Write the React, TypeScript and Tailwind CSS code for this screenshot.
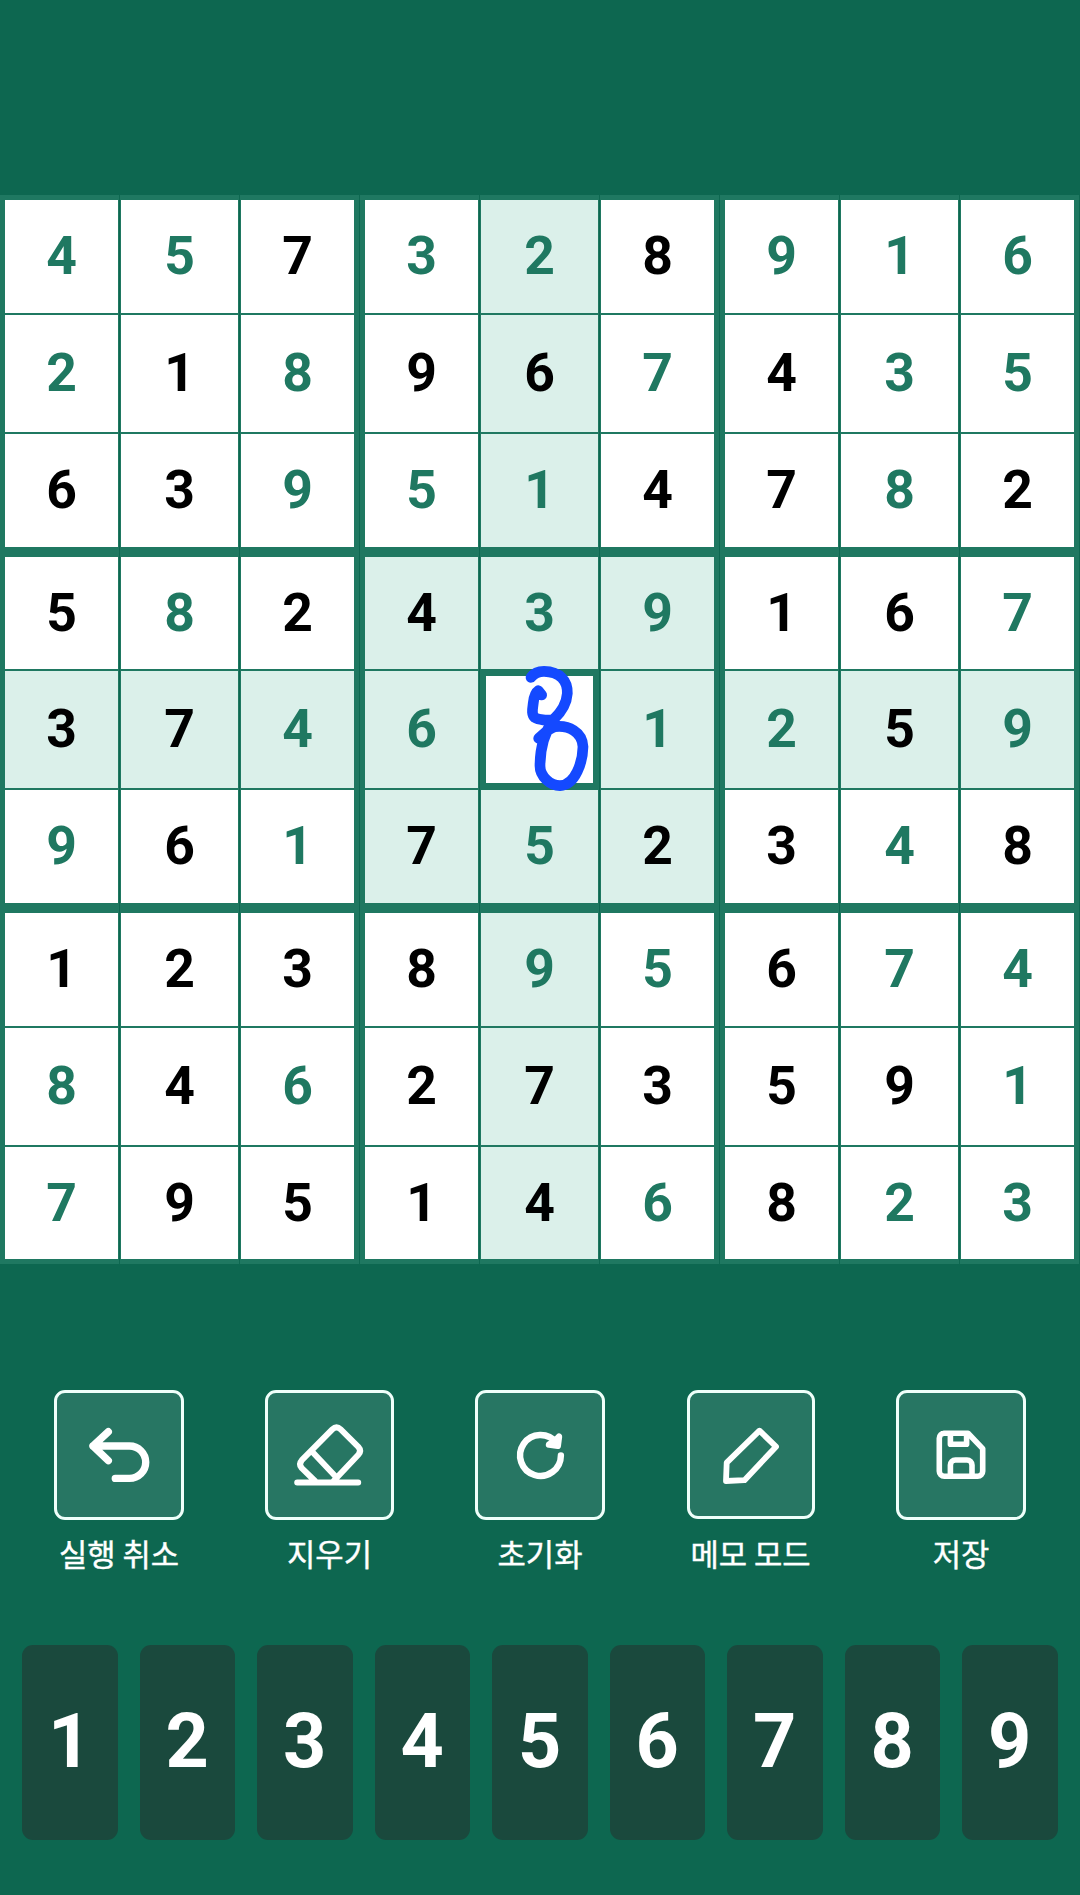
import type { ReactNode } from "react";
import clsx from "clsx";

// lowercase "g" after a digit marks a value entered by the player
const BOARD = [
  "4g 5g 7 3g 2g 8 9g 1g 6g",
  "2g 1 8g 9 6 7g 4 3g 5g",
  "6 3 9g 5g 1g 4 7 8g 2",
  "5 8g 2 4 3g 9g 1 6 7g",
  "3 7 4g 6g . 1g 2g 5 9g",
  "9g 6 1g 7 5g 2 3 4g 8",
  "1 2 3 8 9g 5g 6 7g 4g",
  "8g 4 6g 2 7 3 5 9 1g",
  "7g 9 5 1 4 6g 8 2g 3g",
].map((row) => row.split(" "));

const SELECTED = { row: 4, col: 4 };

const KEYS = [1, 2, 3, 4, 5, 6, 7, 8, 9];

function Icon({ width, children }: { width: number; children: ReactNode }) {
  return (
    <svg
      viewBox="0 0 130 130"
      className="w-[130px] h-[130px] shrink-0"
      fill="none"
      stroke="#fff"
      strokeWidth={width}
      strokeLinecap="round"
      strokeLinejoin="round"
    >
      {children}
    </svg>
  );
}

const TOOLS = [
  {
    label: "실행 취소",
    box: "w-[130px] h-[130px]",
    icon: (
      <Icon width={7.4}>
        <path d="M54.3 41.7 39 56l15.3 14.6M39 56h36.5a16.2 16.2 0 0 1 0 32.4H61.3" />
      </Icon>
    ),
  },
  {
    label: "지우기",
    box: "w-[129px] h-[130px]",
    icon: (
      <Icon width={6}>
        <path d="M32.2 92.4h61M50 91 36.8 78.2q-3.6-4 0-8L67.3 39.4q4.2-4 8.4 0l17.6 17.4q3.6 4 0 8L68.6 91M47 61.5l24.5 26" />
      </Icon>
    ),
  },
  {
    label: "초기화",
    box: "w-[130px] h-[130px]",
    icon: (
      <Icon width={6.4}>
        <path d="M85.9 65.5A20.4 20.4 0 1 1 81.5 52.8" />
        <path d="M84 46.7 82.8 55.8 74 54.6 80 51z" fill="#fff" />
      </Icon>
    ),
  },
  {
    label: "메모 모드",
    box: "w-[128px] h-[129px]",
    icon: (
      <Icon width={5.8}>
        <path d="M73.5 40.7 90 56.7 58.5 90.2 40 91 40.7 72.7z" />
      </Icon>
    ),
  },
  {
    label: "저장",
    box: "w-[130px] h-[130px]",
    icon: (
      <Icon width={5.6}>
        <path d="M48 43.2h24L86.7 58.6V81.3a5 5 0 0 1-5 5H48.3a5 5 0 0 1-5-5V48.2a5 5 0 0 1 5-5z" />
        <path d="M54.4 44v10.2h16.2V44M54.4 86V75a5 5 0 0 1 5-5h11.6a5 5 0 0 1 5 5v11" />
      </Icon>
    ),
  },
];

function Scribble() {
  return (
    <svg
      viewBox="0 0 480 480"
      className="absolute -left-[26px] -top-[26px] w-[160px] h-[160px] max-w-none z-10"
      fill="none"
      stroke="#1449ff"
      strokeWidth={32}
      strokeLinecap="round"
      strokeLinejoin="round"
    >
      <path d="M213 82C224 67 236 64 252 64C300 65 323 92 322 130C320 160 302 188 281 208C262 213 234 209 225 203C213 194 218 174 220 158C222 140 226 128 235 122L245 135" />
      <path d="M281 208C255 245 240 290 240 348C240 380 272 407 300 407C347 405 368 335 369 290C367 245 325 225 285 230C265 236 250 253 236 265L246 266" />
    </svg>
  );
}

function Cell({ value, row, col }: { value: string; row: number; col: number }) {
  const selected = row === SELECTED.row && col === SELECTED.col;
  const sameBox =
    Math.floor(row / 3) === Math.floor(SELECTED.row / 3) &&
    Math.floor(col / 3) === Math.floor(SELECTED.col / 3);
  const highlighted = row === SELECTED.row || col === SELECTED.col || sameBox;

  if (selected) {
    return (
      <div className="relative border-6 border-[#1f7861] bg-white">
        <Scribble />
      </div>
    );
  }

  return (
    <div
      className={clsx(
        "flex items-center justify-center border-[#1f7861] pb-px text-[53.5px] leading-none font-bold",
        row % 3 === 0 ? "border-t-5" : "border-t",
        row % 3 === 2 ? "border-b-5" : "border-b",
        col % 3 === 0 ? "border-l-5" : "border-l",
        col % 3 === 2 ? "border-r-5" : "border-r",
        highlighted ? "bg-[#dbf0ea]" : "bg-white",
        value.endsWith("g") ? "text-[#1f7861]" : "text-black"
      )}
    >
      {value[0]}
    </div>
  );
}

function Board() {
  return (
    <div className="grid w-[1079px] grid-cols-9 grid-rows-[119px_119px_119px_118px_119px_119px_119px_119px_118px] gap-x-px">
      {BOARD.map((cells, row) =>
        cells.map((value, col) => <Cell key={`${row}-${col}`} value={value} row={row} col={col} />)
      )}
    </div>
  );
}

function Toolbar() {
  return (
    <div className="mt-[126px] grid grid-cols-5 px-[13.75px]">
      {TOOLS.map(({ label, box, icon }) => (
        <button key={label} className="flex flex-col items-center">
          <span className="flex h-[130px] items-start">
            <span
              className={clsx(
                "flex items-center justify-center rounded-[11px] border-3 border-[#effffa] bg-[#277663]",
                box
              )}
            >
              {icon}
            </span>
          </span>
          <span className="mt-[15px] h-9 text-[30.8px] leading-9 whitespace-nowrap text-white font-['Noto_Sans_CJK_KR',sans-serif] [-webkit-text-stroke:0.4px_white]">
            {label}
          </span>
        </button>
      ))}
    </div>
  );
}

function Keypad() {
  return (
    <div className="mt-[74px] flex justify-between pl-[22px] pr-[22.4px]">
      {KEYS.map((n) => (
        <button
          key={n}
          className="flex h-[195px] w-[95.5px] items-center justify-center rounded-[11px] bg-[#1a493d] pb-px text-[75.5px] leading-none font-bold text-white"
        >
          {n}
        </button>
      ))}
    </div>
  );
}

export default function App() {
  return (
    <div className="h-[1895px] w-[1080px] overflow-hidden bg-[#0d6750] pt-[195px] font-[Roboto,sans-serif]">
      <Board />
      <Toolbar />
      <Keypad />
    </div>
  );
}
